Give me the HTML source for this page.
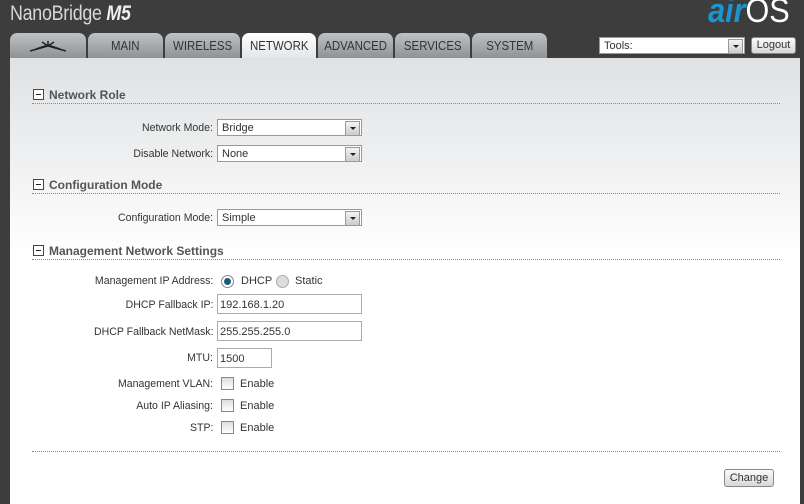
<!DOCTYPE html>
<html><head><style>
*{margin:0;padding:0;box-sizing:border-box}
body{width:804px;height:504px;background:#3d3d3d;font-family:"Liberation Sans",sans-serif;font-size:11px;color:#333;position:relative;overflow:hidden}
.abs{position:absolute}
.title{left:10px;top:2px;color:#d8d8d8;font-size:21px;transform:scaleX(.85);transform-origin:left;letter-spacing:-.3px}
.title b{font-style:italic;color:#eee}
.airos{right:14px;top:-8px;font-size:34px;transform:scaleX(.9);transform-origin:right}
.tab{top:33px;height:25px;border-radius:7px 7px 0 0;background:linear-gradient(#bfc1c4,#8f9296);color:#333;font-size:13px;text-align:center;line-height:26px}
.tab span{display:inline-block;transform:scaleX(.88)}
.tab.on{background:linear-gradient(#fff,#e4e6e8)}
.panel{left:10px;top:58px;width:790px;height:446px;background:linear-gradient(#dfe1e3,#fff 200px)}
.sec{left:33px;font-weight:bold;color:#555;font-size:12px}
.sec i{display:inline-block;width:11px;height:11px;border:1px solid #444;vertical-align:-1px;margin-right:5px;position:relative;background:#fff}
.sec i:after{content:"";position:absolute;left:2px;top:4px;width:5px;height:1px;background:#222}
.dl{left:32px;width:748px;border-top:1px dotted #888}
.lbl{right:591px;text-align:right;white-space:nowrap;transform:scaleX(.96);transform-origin:right}
.sel{left:217px;width:145px;height:17px;border:1px solid #999;background:#fff;padding:2px 4px 0;line-height:13px}
.sel:after{content:"";position:absolute;right:1px;top:1px;width:13px;height:13px;background:linear-gradient(#f3f3f3,#ccc);border:1px solid #999}
.sel:before{content:"";position:absolute;right:5px;top:7px;border:3px solid transparent;border-top:3px solid #222;z-index:2}
.inp{left:217px;height:20px;border:1px solid #aaa;background:#fff;padding:3px 2px 0;line-height:14px}
.cb{left:221px;width:13px;height:13px;border:1px solid #888;background:linear-gradient(#ddd,#fff)}
.btn{border:1px solid #888;border-radius:3px;background:linear-gradient(#fafafa,#d8d8d8);text-align:center;color:#333}
</style></head><body>
<div class="abs title">NanoBridge <b>M5</b></div>
<div class="abs airos"><span style="color:#1a95d0;font-style:italic;font-weight:bold">air</span><span style="color:#fff">OS</span></div>
<div class="abs tab" style="left:10px;width:76px"><svg width="40" height="14" viewBox="0 0 40 14" style="vertical-align:middle"><path d="M2 11 L20 6 L38 11 M20 6 L14 2 M20 6 L26 2 M20 6 L20 1 M8 9 L20 5 L32 9" stroke="#222" stroke-width="1.5" fill="none"/></svg></div>
<div class="abs tab" style="left:88px;width:75px"><span>MAIN</span></div>
<div class="abs tab" style="left:165px;width:75px"><span>WIRELESS</span></div>
<div class="abs tab on" style="left:242px;width:74px"><span>NETWORK</span></div>
<div class="abs tab" style="left:318px;width:75px"><span>ADVANCED</span></div>
<div class="abs tab" style="left:395px;width:75px"><span>SERVICES</span></div>
<div class="abs tab" style="left:472px;width:75px"><span>SYSTEM</span></div>
<div class="abs sel" style="left:599px;top:37px;width:146px">Tools:</div>
<div class="abs btn" style="left:751px;top:37px;width:45px;height:17px;line-height:15px">Logout</div>
<div class="abs panel"></div>

<div class="abs sec" style="top:88px"><i></i>Network Role</div>
<div class="abs dl" style="top:103px"></div>
<div class="abs lbl" style="top:122px">Network Mode:</div>
<div class="abs sel" style="top:119px">Bridge</div>
<div class="abs lbl" style="top:148px">Disable Network:</div>
<div class="abs sel" style="top:145px">None</div>

<div class="abs sec" style="top:178px"><i></i>Configuration Mode</div>
<div class="abs dl" style="top:193px"></div>
<div class="abs lbl" style="top:212px">Configuration Mode:</div>
<div class="abs sel" style="top:209px">Simple</div>

<div class="abs sec" style="top:244px"><i></i>Management Network Settings</div>
<div class="abs dl" style="top:259px"></div>
<div class="abs lbl" style="top:275px">Management IP Address:</div>
<div class="abs" style="left:221px;top:275px;width:13px;height:13px;border-radius:50%;border:1px solid #888;background:#fff"><div style="margin:2px;width:7px;height:7px;border-radius:50%;background:#1c5a7d"></div></div>
<div class="abs" style="left:241px;top:275px">DHCP</div>
<div class="abs" style="left:276px;top:275px;width:13px;height:13px;border-radius:50%;border:1px solid #aaa;background:#ddd"></div>
<div class="abs" style="left:295px;top:275px">Static</div>
<div class="abs lbl" style="top:299px">DHCP Fallback IP:</div>
<div class="abs inp" style="top:294px;width:145px">192.168.1.20</div>
<div class="abs lbl" style="top:326px">DHCP Fallback NetMask:</div>
<div class="abs inp" style="top:321px;width:145px">255.255.255.0</div>
<div class="abs lbl" style="top:352px">MTU:</div>
<div class="abs inp" style="top:348px;width:55px">1500</div>
<div class="abs lbl" style="top:378px">Management VLAN:</div>
<div class="abs cb" style="top:377px"></div><div class="abs" style="left:240px;top:378px">Enable</div>
<div class="abs lbl" style="top:400px">Auto IP Aliasing:</div>
<div class="abs cb" style="top:399px"></div><div class="abs" style="left:240px;top:400px">Enable</div>
<div class="abs lbl" style="top:422px">STP:</div>
<div class="abs cb" style="top:421px"></div><div class="abs" style="left:240px;top:422px">Enable</div>
<div class="abs dl" style="top:451px"></div>
<div class="abs btn" style="left:724px;top:469px;width:50px;height:18px;line-height:16px">Change</div>
</body></html>
